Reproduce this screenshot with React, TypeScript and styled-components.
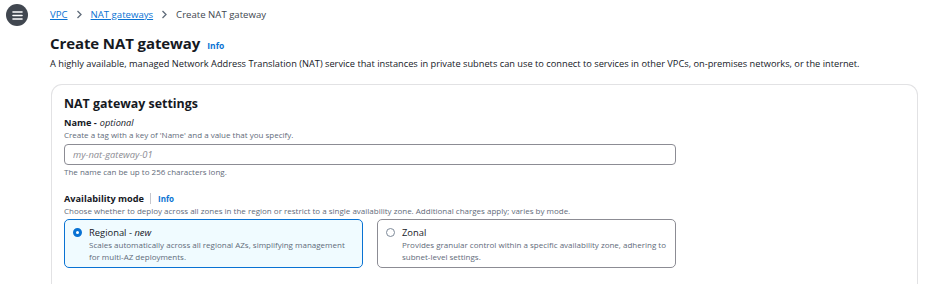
import React from "react";
import styled, { createGlobalStyle } from "styled-components";

const GlobalStyle = createGlobalStyle`
  body {
    margin: 0;
    background: #ffffff;
    font-family: "Open Sans", "Noto Sans", Arial, sans-serif;
    color: #16191f;
  }
`;

const Page = styled.div`
  display: grid;
  grid-template-columns: 50px 1fr;
  width: 936px;
  height: 284px;
  overflow: hidden;
`;

const Rail = styled.div`
  padding: 4px 0 0 6px;
`;

const MenuButton = styled.button`
  width: 22px;
  height: 22px;
  border-radius: 50%;
  border: 0;
  padding: 0;
  background: #414750;
  display: flex;
  align-items: center;
  justify-content: center;
`;

const Main = styled.div`
  display: flex;
  flex-direction: column;
  padding-right: 18px;
`;

const Crumbs = styled.nav`
  display: flex;
  align-items: center;
  gap: 8px;
  height: 28px;
  font-size: 9.6px;
`;

const CrumbLink = styled.a`
  color: #0972d3;
  text-decoration: underline;
`;

const CrumbCurrent = styled.span`
  color: #414750;
`;

const TitleRow = styled.div`
  display: flex;
  align-items: baseline;
  gap: 7px;
  margin-top: 2px;
`;

const Title = styled.h1`
  margin: 0;
  font-size: 15px;
  font-weight: 700;
  line-height: 26px;
  letter-spacing: -0.1px;
`;

const InfoLink = styled.a<{ $small?: boolean }>`
  color: #0972d3;
  font-weight: 700;
  font-size: ${(p) => (p.$small ? "8px" : "8.5px")};
`;

const Description = styled.p`
  margin: 1px 0 0;
  font-size: 9.25px;
  line-height: 14px;
  color: #16191f;
`;

const Card = styled.section`
  margin: 13px 0 0 1px;
  border: 1px solid #e2e2e4;
  border-bottom: 0;
  border-radius: 11px 11px 0 0;
  padding: 9px 12px 0;
  flex: 1;
`;

const CardTitle = styled.h2`
  margin: 0;
  font-size: 12.4px;
  font-weight: 700;
  line-height: 20px;
`;

const Field = styled.div<{ $gap: number }>`
  display: flex;
  flex-direction: column;
  margin-top: ${(p) => p.$gap}px;
`;

const Label = styled.div`
  display: flex;
  align-items: center;
  font-size: 9.2px;
  font-weight: 700;
  line-height: 13px;
`;

const Optional = styled.em`
  font-weight: 400;
  margin-left: 3px;
`;

const Divider = styled.span`
  width: 1px;
  height: 11px;
  background: #c6c6cd;
  margin: 0 7px 0 6px;
`;

const Hint = styled.div`
  font-size: 8px;
  line-height: 12px;
  color: #5f6b7a;
`;

const Input = styled.input`
  box-sizing: border-box;
  width: 612px;
  height: 21px;
  margin: 3px 0 1px;
  border: 1px solid #8c8c94;
  border-radius: 4px;
  padding: 0 8px;
  font-family: inherit;
  font-size: 9.4px;
  &::placeholder {
    color: #8c8c94;
    font-style: italic;
  }
`;

const Tiles = styled.div`
  display: grid;
  grid-template-columns: 299px 299px;
  gap: 14px;
  margin-top: 2px;
`;

const Tile = styled.label<{ $active?: boolean }>`
  box-sizing: border-box;
  height: 49px;
  display: flex;
  gap: 7px;
  padding: 6px 5px 0 8px;
  border-radius: 5px;
  border: ${(p) => (p.$active ? "1.5px solid #0972d3" : "1px solid #8c8c94")};
  background: ${(p) => (p.$active ? "#f0fbff" : "#ffffff")};
`;

const Radio = styled.span<{ $checked?: boolean }>`
  box-sizing: border-box;
  flex: none;
  width: 9px;
  height: 9px;
  margin-top: 2px;
  border-radius: 50%;
  border: ${(p) => (p.$checked ? "3px solid #0972d3" : "1px solid #7d8998")};
  background: #ffffff;
`;

const TileBody = styled.div`
  display: flex;
  flex-direction: column;
`;

const TileTitle = styled.div`
  font-size: 9.4px;
  line-height: 13px;
`;

const TileText = styled.div`
  font-size: 8px;
  line-height: 12px;
  color: #5f6b7a;
`;

const Chevron = () => (
  <svg width="7" height="9" viewBox="0 0 7 9">
    <path d="M1.5 1 L5 4.5 L1.5 8" fill="none" stroke="#5f6b7a" strokeWidth="1.3" />
  </svg>
);

export default function App() {
  return (
    <>
      <GlobalStyle />
      <Page>
        <Rail>
          <MenuButton aria-label="Open navigation">
            <svg width="11" height="9" viewBox="0 0 11 9">
              <path d="M1 1 H10 M1 4.5 H10 M1 8 H10" stroke="#ffffff" strokeWidth="1.6" strokeLinecap="round" />
            </svg>
          </MenuButton>
        </Rail>
        <Main>
          <Crumbs>
            <CrumbLink>VPC</CrumbLink>
            <Chevron />
            <CrumbLink>NAT gateways</CrumbLink>
            <Chevron />
            <CrumbCurrent>Create NAT gateway</CrumbCurrent>
          </Crumbs>
          <TitleRow>
            <Title>Create NAT gateway</Title>
            <InfoLink>Info</InfoLink>
          </TitleRow>
          <Description>
            A highly available, managed Network Address Translation (NAT) service that instances in private subnets can use
            to connect to services in other VPCs, on-premises networks, or the internet.
          </Description>
          <Card>
            <CardTitle>NAT gateway settings</CardTitle>
            <Field $gap={2}>
              <Label>
                Name -<Optional>optional</Optional>
              </Label>
              <Hint>Create a tag with a key of 'Name' and a value that you specify.</Hint>
              <Input placeholder="my-nat-gateway-01" />
              <Hint>The name can be up to 256 characters long.</Hint>
            </Field>
            <Field $gap={14}>
              <Label>
                Availability mode
                <Divider />
                <InfoLink $small>Info</InfoLink>
              </Label>
              <Hint>
                Choose whether to deploy across all zones in the region or restrict to a single availability zone. Additional
                charges apply; varies by mode.
              </Hint>
              <Tiles>
                <Tile $active>
                  <Radio $checked />
                  <TileBody>
                    <TileTitle>
                      Regional - <em>new</em>
                    </TileTitle>
                    <TileText>
                      Scales automatically across all regional AZs, simplifying management for multi-AZ deployments.
                    </TileText>
                  </TileBody>
                </Tile>
                <Tile>
                  <Radio />
                  <TileBody>
                    <TileTitle>Zonal</TileTitle>
                    <TileText>
                      Provides granular control within a specific availability zone, adhering to subnet-level settings.
                    </TileText>
                  </TileBody>
                </Tile>
              </Tiles>
            </Field>
          </Card>
        </Main>
      </Page>
    </>
  );
}
